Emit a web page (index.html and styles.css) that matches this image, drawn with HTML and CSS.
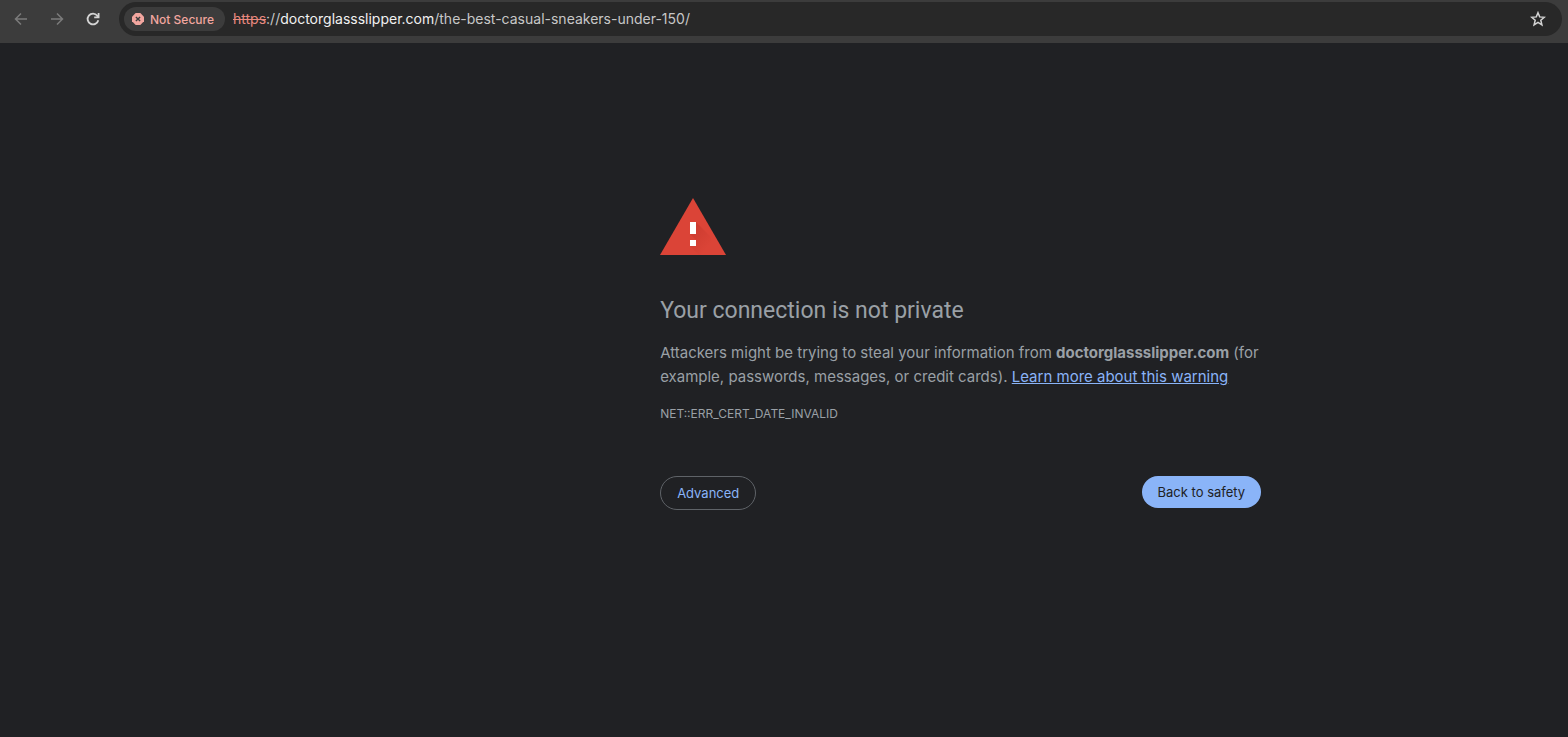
FILE: index.html
```
<!DOCTYPE html>
<html lang="en">
<head>
<meta charset="utf-8">
<meta name="viewport" content="width=device-width, initial-scale=1">
<title>Privacy error</title>
<link rel="stylesheet" href="styles.css">
</head>
<body>
<header class="toolbar">
  <nav class="nav" aria-label="Browser navigation">
    <button class="icon-button dim" type="button" aria-label="Back"><svg viewBox="0 0 16 16"><path d="M14 8H2.500M8 2.500 2.500 8 8 13.500"/></svg></button>
    <button class="icon-button dim" type="button" aria-label="Forward"><svg viewBox="0 0 16 16"><path d="M2 8h11.500M8 2.500 13.500 8 8 13.500"/></svg></button>
    <button class="icon-button" type="button" aria-label="Reload"><svg viewBox="0 0 16 16"><path class="heavy" d="M13.300 9.200A5.400 5.400 0 1 1 12.300 4.700L13.500 6.200M13.600 2v4.400H9.200"/></svg></button>
  </nav>
  <div class="omnibox">
    <button class="chip" type="button">
      <svg class="chip-icon" viewBox="0 0 12 12"><path class="badge" d="M3.700 0h4.600L12 3.700v4.600L8.300 12H3.700L0 8.300V3.700z"/><path class="cross" d="m3.900 3.900 4.200 4.200m0-4.200L3.900 8.100"/></svg>
      <span>Not Secure</span>
    </button>
    <div class="url"><s>https</s>://<span class="host">doctorglassslipper.com</span>/the-best-casual-sneakers-under-150/</div>
    <button class="icon-button star" type="button" aria-label="Bookmark this tab"><svg viewBox="0 0 16 16"><path class="outline" d="m8 1.700 1.700 4.200 4.600.4-3.500 3 1.100 4.500L8 11.400l-3.900 2.400 1.100-4.500-3.500-3 4.600-.4z"/></svg></button>
  </div>
</header>
<main class="page">
  <section class="warning">
    <svg class="alert" viewBox="0 0 66 57" role="img" aria-label="Warning">
      <defs>
        <linearGradient id="shade" x1="0" y1="0" x2="1" y2="1">
          <stop offset="0" stop-color="#c93a2e"/>
          <stop offset="0.700" stop-color="#db4437"/>
        </linearGradient>
      </defs>
      <path fill="#db4437" d="M33 0 66 57H0z"/>
      <path fill="url(#shade)" d="M36 24 50 38 58 57H39l-9-9 6-6-6-6z"/>
      <path fill="#fff" d="M30 24h6v12h-6zM30 42h6v6h-6z"/>
    </svg>
    <h1>Your connection is not private</h1>
    <p class="message">Attackers might be trying to steal your information from <strong>doctorglassslipper.com</strong> (for example, passwords, messages, or credit cards). <a href="#learn">Learn more about this warning</a></p>
    <p class="code">NET::ERR_CERT_DATE_INVALID</p>
    <div class="actions">
      <button class="pill secondary" type="button">Advanced</button>
      <button class="pill primary" type="button">Back to safety</button>
    </div>
  </section>
</main>
</body>
</html>
```
FILE: styles.css
```
* { box-sizing: border-box; }
body {
  margin: 0;
  min-height: 100vh;
  background: #202124;
  color: #9aa0a6;
  font-family: Inter, "Liberation Sans", sans-serif;
}
button { font: inherit; border: 0; padding: 0; cursor: pointer; }
.toolbar {
  display: flex;
  align-items: center;
  gap: 16px;
  padding: 2px 6px 7px 11px;
  background: #3c3c3c;
}
.nav { display: flex; gap: 16px; }
.icon-button {
  display: grid;
  place-items: center;
  width: 20px;
  height: 20px;
  background: none;
  color: #d4d4d4;
}
.icon-button svg {
  width: 16px;
  height: 16px;
  fill: none;
  stroke: currentColor;
  stroke-width: 1.5;
}
.icon-button .heavy { stroke-width: 1.8; }
.icon-button.dim { color: #7b7b7b; }
.omnibox {
  flex: 1;
  display: flex;
  align-items: center;
  gap: 8px;
  height: 34px;
  padding: 0 14px 0 5px;
  border-radius: 17px;
  background: #282828;
}
.chip {
  display: flex;
  align-items: center;
  gap: 6px;
  height: 24px;
  padding: 0 11px 0 8px;
  border-radius: 12px;
  background: #3c3c3c;
  color: #f2a69f;
  font-size: 12px;
  font-weight: 500;
}
.chip-icon { width: 12px; height: 12px; }
.badge { fill: #f2a69f; }
.cross { stroke: #3c3c3c; stroke-width: 1.4; }
.url { flex: 1; color: #c7c7c7; font-size: 14px; line-height: 16px; white-space: nowrap; }
.url s { color: #e9897f; }
.host { color: #f1f1f1; }
.page { padding: 155px 24px 48px 42.1%; }
.warning { max-width: 601px; }
.alert { display: block; width: 66px; height: 57px; }
h1 {
  margin: 40px 0 14px;
  font-family: Roboto, "Liberation Sans", sans-serif;
  font-size: 23px;
  font-weight: 400;
  line-height: 32px;
}
.message { margin: 0; font-size: 15px; line-height: 24px; }
.message a { color: #8ab4f8; }
.code { margin: 17px 0 0; font-size: 12px; line-height: 16px; }
.actions {
  display: flex;
  justify-content: space-between;
  align-items: flex-start;
  margin-top: 54px;
}
.pill { height: 32px; padding: 0 16px; border-radius: 17px; font-size: 13px; }
.primary { background: #8ab4f8; color: #202124; }
.secondary { height: 34px; border: 1px solid #5f6368; background: none; color: #8ab4f8; }
```
